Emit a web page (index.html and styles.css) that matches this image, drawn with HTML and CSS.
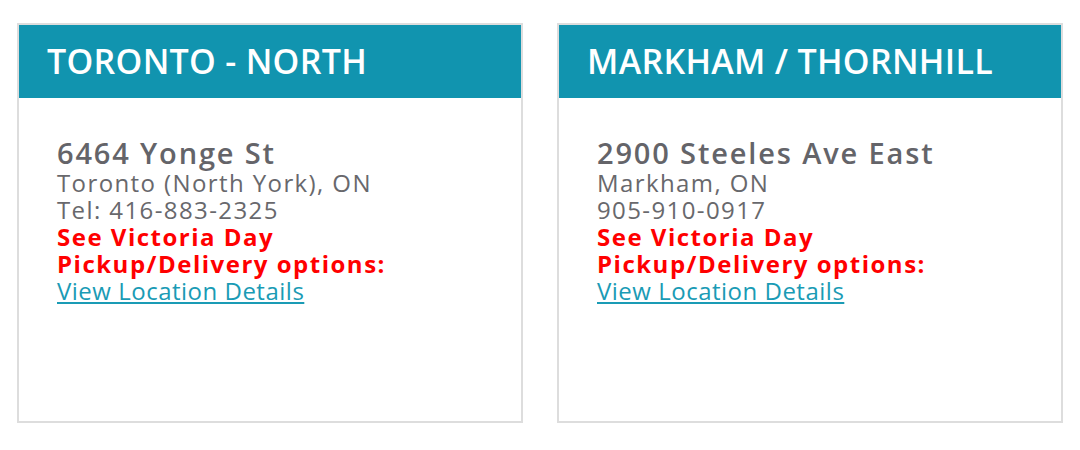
FILE: index.html
```html
<!DOCTYPE html>
<html>
<head>
<meta charset="utf-8">
<link rel="stylesheet" href="styles.css">
</head>
<body>
<div class="locations">
  <div class="card">
    <div class="card-head">TORONTO - NORTH</div>
    <div class="card-body">
      <div class="street">6464 Yonge St</div>
      <div class="line">Toronto (North York), ON</div>
      <div class="line">Tel: 416-883-2325</div>
      <div class="notice">See Victoria Day<br>Pickup/Delivery options:</div>
      <a class="details" href="#">View Location Details</a>
    </div>
  </div>
  <div class="card">
    <div class="card-head">MARKHAM / THORNHILL</div>
    <div class="card-body">
      <div class="street">2900 Steeles Ave East</div>
      <div class="line">Markham, ON</div>
      <div class="line">905-910-0917</div>
      <div class="notice">See Victoria Day<br>Pickup/Delivery options:</div>
      <a class="details" href="#">View Location Details</a>
    </div>
  </div>
</div>
</body>
</html>
```
FILE: styles.css
```css
html, body {
  margin: 0;
  padding: 0;
  background: #fff;
  font-family: "Open Sans", "Liberation Sans", sans-serif;
}
.locations {
  display: flex;
  gap: 34px;
  padding: 23px 0 0 17px;
}
.card {
  width: 502px;
  height: 396px;
  border: 2px solid #dddddd;
  background: #fff;
}
.card-head {
  background: #1194af;
  color: #fff;
  height: 73px;
  box-sizing: border-box;
  padding-left: 28px;
  font-size: 34px;
  font-weight: 600;
  line-height: 73px;
  letter-spacing: 0.3px;
}
.card-body {
  padding: 38px 0 0 38px;
  color: #68686c;
}
.street {
  font-size: 29px;
  font-weight: 600;
  line-height: 33px;
  letter-spacing: 1.85px;
  color: #646469;
}
.line {
  font-size: 24px;
  line-height: 27px;
  letter-spacing: 1.4px;
}
.notice {
  font-size: 24px;
  line-height: 27px;
  font-weight: 700;
  letter-spacing: 1.5px;
  color: #ff0000;
}
.details {
  font-size: 24px;
  line-height: 27px;
  letter-spacing: 0.5px;
  color: #1a9bb5;
  text-decoration: underline;
}
```
